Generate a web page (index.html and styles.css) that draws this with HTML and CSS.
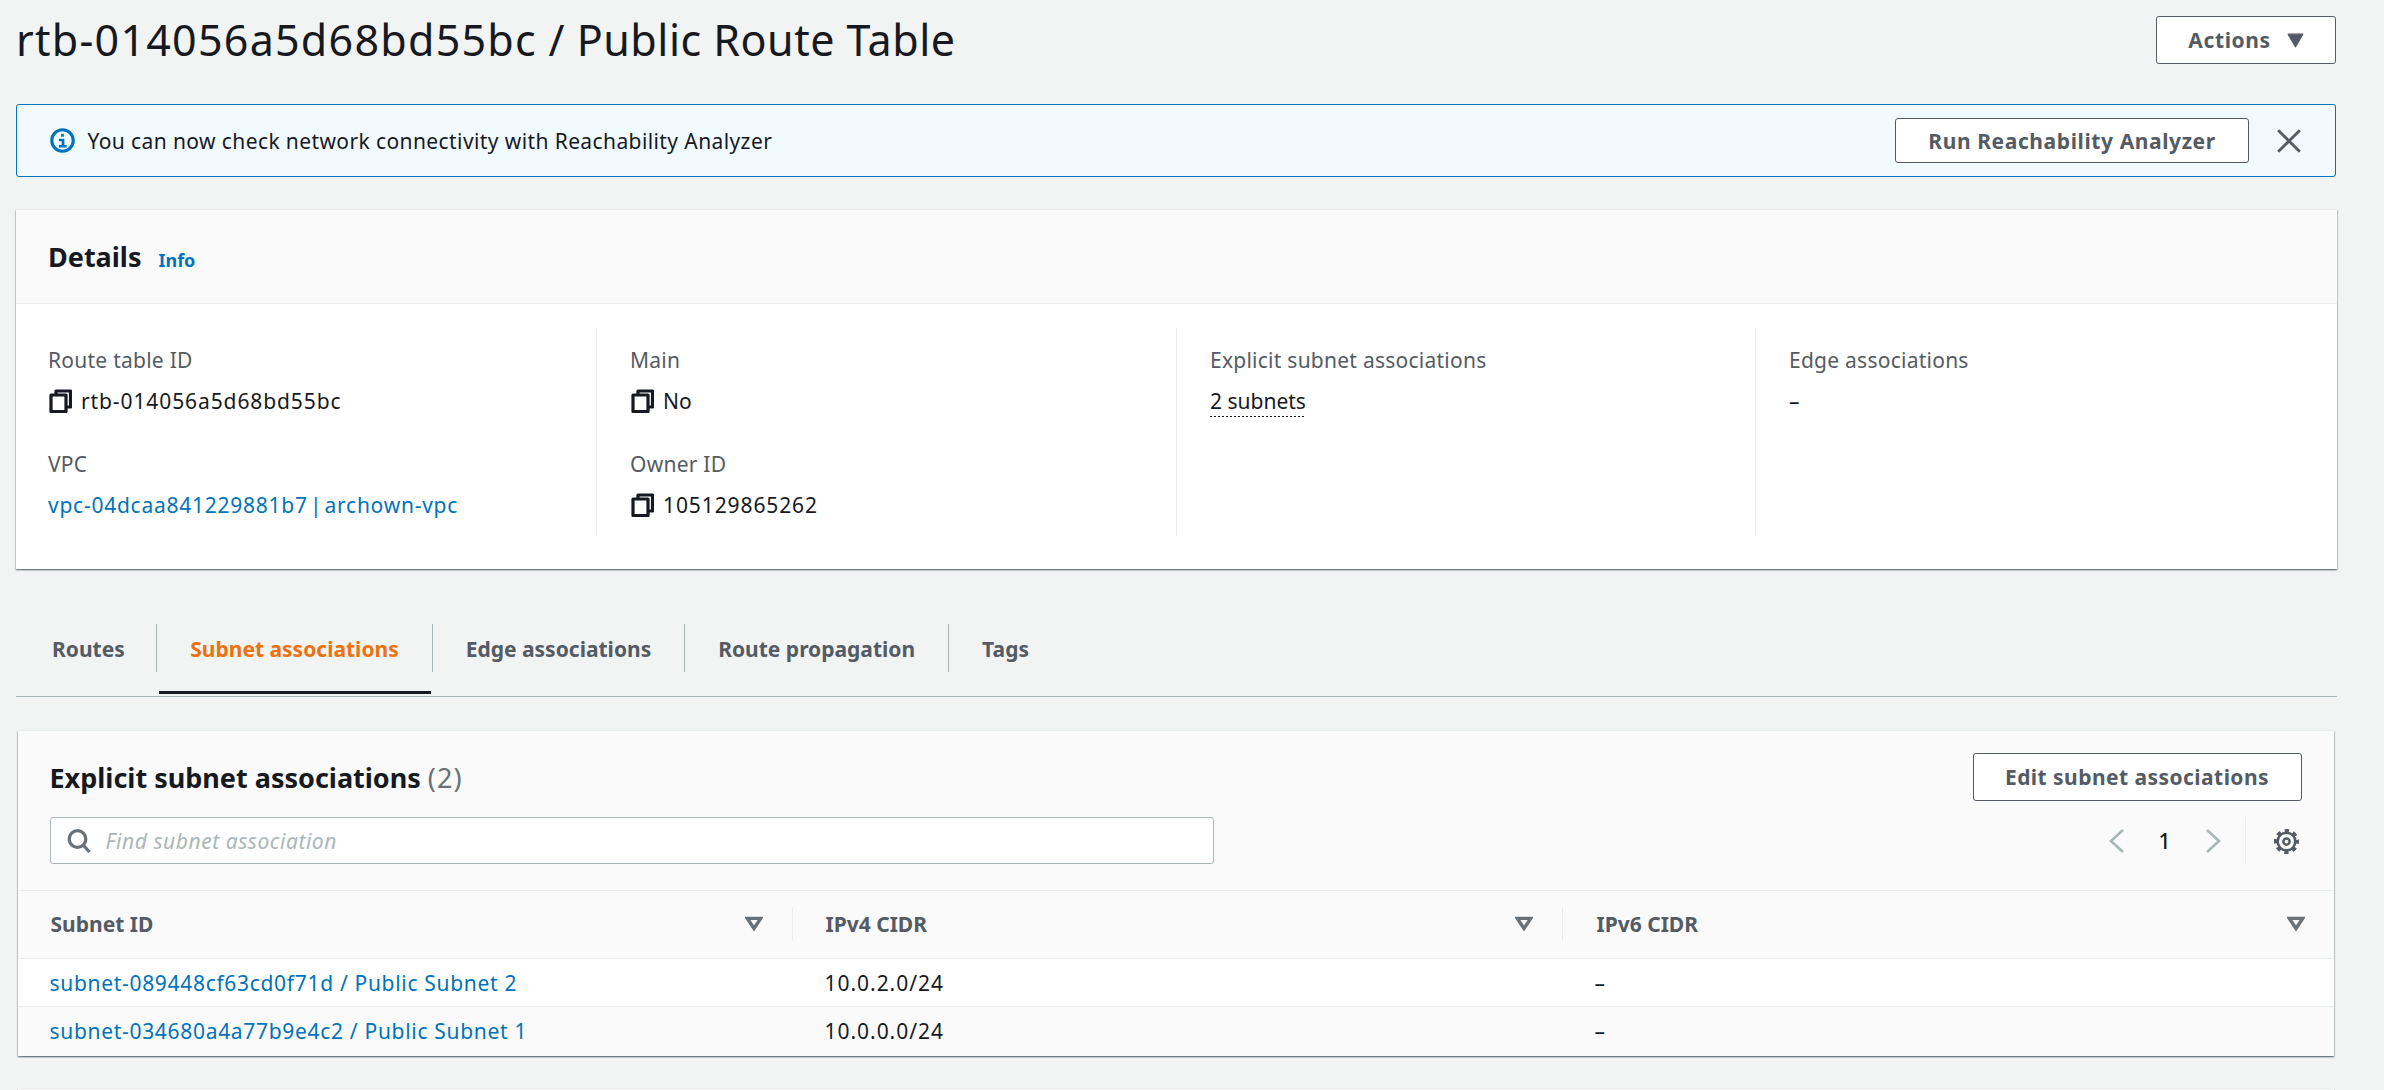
FILE: index.html
```html
<!DOCTYPE html>
<html lang="en">
<head>
    <meta charset="UTF-8">
    <meta name="viewport" content="width=device-width, initial-scale=1.0">
    <title>Route table</title>
    <link rel="stylesheet" href="styles.css">
</head>
<body>
    <div class="page">
        <div class="page-header">
            <h1><span class="h1-id">rtb-014056a5d68bd55bc</span> / Public Route Table</h1>
            <button class="btn btn-actions">Actions
                <svg class="caret" viewBox="0 0 16 14"><path d="M1 1h14L8 13z"/></svg>
            </button>
        </div>

        <div class="alert">
            <svg class="alert-icon" viewBox="0 0 24 24"><circle cx="12" cy="12" r="10.300"/><path class="alert-i" d="M12 5.500v3M8.500 11.500H12.500V17.500M8.500 17.500h7.500"/></svg>
            <span class="alert-text">You can now check network connectivity with Reachability Analyzer</span>
            <button class="btn btn-run">Run Reachability Analyzer</button>
            <svg class="alert-close" viewBox="0 0 24 24"><path d="M2 2l20 20M22 2L2 22"/></svg>
        </div>

        <div class="card card-details">
            <div class="details-head">
                <h2>Details</h2>
                <a class="info-link">Info</a>
            </div>
            <div class="details-grid">
                <div class="col">
                    <div class="field">
                        <div class="label">Route table ID</div>
                        <div class="value num"><svg class="copy" viewBox="0 0 23 24"><path d="M7 5V2h14.500v16H17M2 6h15v16.500H2z"/></svg>rtb-014056a5d68bd55bc</div>
                    </div>
                    <div class="field">
                        <div class="label">VPC</div>
                        <div class="value link vpc-link">vpc-04dcaa841229881b7 | archown-vpc</div>
                    </div>
                </div>
                <div class="col">
                    <div class="field">
                        <div class="label">Main</div>
                        <div class="value"><svg class="copy" viewBox="0 0 23 24"><path d="M7 5V2h14.500v16H17M2 6h15v16.500H2z"/></svg>No</div>
                    </div>
                    <div class="field">
                        <div class="label">Owner ID</div>
                        <div class="value num"><svg class="copy" viewBox="0 0 23 24"><path d="M7 5V2h14.500v16H17M2 6h15v16.500H2z"/></svg>105129865262</div>
                    </div>
                </div>
                <div class="col">
                    <div class="field">
                        <div class="label">Explicit subnet associations</div>
                        <div class="value"><span class="dotted">2 subnets</span></div>
                    </div>
                </div>
                <div class="col">
                    <div class="field">
                        <div class="label">Edge associations</div>
                        <div class="value">–</div>
                    </div>
                </div>
            </div>
        </div>

        <div class="tabs">
            <div class="tab tab-routes">Routes</div>
            <div class="tab tab-active">Subnet associations</div>
            <div class="tab">Edge associations</div>
            <div class="tab">Route propagation</div>
            <div class="tab tab-last">Tags</div>
        </div>

        <div class="card card-table">
            <div class="table-head">
                <div class="table-title-row">
                    <h2>Explicit subnet associations <span class="count">(2)</span></h2>
                    <button class="btn btn-edit">Edit subnet associations</button>
                </div>
                <div class="filter-row">
                    <div class="search">
                        <svg class="search-icon" viewBox="0 0 24 24"><circle cx="10.500" cy="10" r="8.300"/><path d="M16.500 16.500l6 6.500"/></svg>
                        <span>Find subnet association</span>
                    </div>
                    <div class="pager">
                        <svg class="chev" viewBox="0 0 16 24"><path d="M14 1L2 12l12 11"/></svg>
                        <span class="page-num">1</span>
                        <svg class="chev" viewBox="0 0 16 24"><path d="M2 1l12 11L2 23"/></svg>
                        <div class="pager-sep">
                            <svg class="gear" viewBox="0 0 24 24"><circle cx="12" cy="12" r="3"/><circle cx="12" cy="12" r="8.500"/><circle class="gear-teeth" cx="12" cy="12" r="10.300"/></svg>
                        </div>
                    </div>
                </div>
            </div>
            <table class="subnets">
                <thead>
                    <tr>
                        <th><div class="th-in">Subnet ID<svg class="sort" viewBox="0 0 16 14"><path d="M2 2h12L8 11z"/></svg></div></th>
                        <th><div class="th-in">IPv4 CIDR<svg class="sort" viewBox="0 0 16 14"><path d="M2 2h12L8 11z"/></svg></div></th>
                        <th><div class="th-in th-last">IPv6 CIDR<svg class="sort" viewBox="0 0 16 14"><path d="M2 2h12L8 11z"/></svg></div></th>
                    </tr>
                </thead>
                <tbody>
                    <tr>
                        <td class="link">subnet-089448cf63cd0f71d / Public Subnet 2</td>
                        <td class="cidr">10.0.2.0/24</td>
                        <td>–</td>
                    </tr>
                    <tr class="row-alt">
                        <td class="link">subnet-034680a4a77b9e4c2 / Public Subnet 1</td>
                        <td class="cidr">10.0.0.0/24</td>
                        <td>–</td>
                    </tr>
                </tbody>
            </table>
        </div>
        <div class="card card-next"></div>
    </div>
</body>
</html>
```
FILE: styles.css
```css
html, body {
    margin: 0;
    height: 1090px;
    overflow: hidden;
}
body {
    background-color: #f2f3f3;
    color: #16191f;
    font-family: "Noto Sans", sans-serif;
    font-size: 21px;
}
.page {
    width: 2320px;
    padding: 16px 0 0 16px;
}
h1, h2 {
    margin: 0;
}

/* header */
.page-header {
    display: flex;
    justify-content: space-between;
    align-items: center;
    height: 48px;
}
h1 {
    font-size: 43px;
    font-weight: 400;
    letter-spacing: .5px;
    margin-top: -2px;
}
.h1-id {
    letter-spacing: 1.25px;
}
.btn {
    box-sizing: border-box;
    display: flex;
    align-items: center;
    justify-content: center;
    background-color: #fff;
    border: 1.5px solid #545b64;
    border-radius: 3px;
    color: #545b64;
    font-family: inherit;
    font-size: 21px;
    font-weight: 700;
    letter-spacing: .45px;
    padding: 0;
}
.btn-actions {
    width: 180px;
    height: 48px;
    gap: 16px;
    letter-spacing: .6px;
}
.caret {
    width: 17px;
    height: 15px;
    fill: #545b64;
    stroke: #545b64;
    stroke-width: 1;
    stroke-linejoin: round;
}

/* alert */
.alert {
    box-sizing: border-box;
    display: flex;
    align-items: center;
    height: 73px;
    margin-top: 40px;
    padding: 0 33px 0 32.5px;
    background-color: #f1faff;
    border: 1.5px solid #0073bb;
    border-radius: 3px;
}
.alert-icon {
    width: 25px;
    height: 25px;
    fill: none;
    stroke: #0073bb;
    stroke-width: 3;
}
.alert-i {
    stroke-width: 2.6;
}
.alert-text {
    margin-left: 13px;
    flex: 1;
    letter-spacing: .4px;
}
.btn-run {
    width: 354px;
    height: 45px;
    letter-spacing: .6px;
}
.alert-close {
    width: 26px;
    height: 26px;
    margin-left: 27px;
    fill: none;
    stroke: #545b64;
    stroke-width: 2.6;
}

/* cards */
.card {
    background-color: #fff;
    box-shadow: 0 1.5px 1.5px 0 rgba(0, 28, 36, .4), 1px 1px 1px 0 rgba(0, 28, 36, .12), -1px 1px 1px 0 rgba(0, 28, 36, .12);
    border-top: 1.5px solid #eaeded;
}
.card-details {
    box-sizing: border-box;
    width: 2321px;
    height: 360px;
    margin-top: 32px;
}
.details-head {
    box-sizing: border-box;
    display: flex;
    align-items: baseline;
    gap: 17px;
    height: 94px;
    padding: 28px 32px 0;
    background-color: #fafafa;
    border-bottom: 1.5px solid #eaeded;
}
h2 {
    font-size: 27px;
    font-weight: 700;
}
.info-link {
    color: #0073bb;
    font-size: 18px;
    font-weight: 700;
}
.details-grid {
    display: grid;
    grid-template-columns: 565px 580px 579px 1fr;
    padding: 24px 0 0 16px;
}
.col {
    height: 208px;
    padding-left: 16px;
    border-right: 1.5px solid #eaeded;
}
.col + .col {
    padding-left: 33px;
}
.col:last-child {
    border-right: none;
}
.field {
    height: 104px;
    padding-top: 16px;
    box-sizing: border-box;
}
.label {
    color: #545b64;
    line-height: 32px;
    letter-spacing: .25px;
}
.value {
    display: flex;
    align-items: center;
    gap: 10px;
    line-height: 32px;
    margin-top: 9px;
}
.num {
    letter-spacing: .9px;
}
.link {
    color: #0073bb;
}
.vpc-link {
    letter-spacing: .75px;
    word-spacing: -4px;
}
.copy {
    width: 23px;
    height: 24px;
    margin-left: 1px;
    margin-right: -1px;
    fill: none;
    stroke: #16191f;
    stroke-width: 3.2;
    stroke-linejoin: round;
}
.dotted {
    height: 32px;
    background-image: linear-gradient(to right, #16191f 50%, transparent 50%);
    background-size: 4px 1.5px;
    background-repeat: repeat-x;
    background-position: left bottom;
}

/* tabs */
.tabs {
    display: flex;
    box-sizing: border-box;
    height: 128px;
    padding-top: 55px;
    width: 2321px;
    border-bottom: 1.5px solid #aab7b8;
}
.tab {
    box-sizing: border-box;
    height: 48px;
    line-height: 50px;
    padding: 0 33px;
    color: #545b64;
    font-weight: 700;
    border-right: 1.5px solid #aab7b8;
    position: relative;
}
.tab-routes {
    padding-left: 36px;
    padding-right: 31.5px;
}
.tab-active {
    color: #ec7211;
}
.tab-active::after {
    content: "";
    position: absolute;
    left: 2px;
    right: 1px;
    top: 67px;
    height: 3px;
    background-color: #16191f;
}
.tab-last {
    border-right: none;
}

/* table card */
.card-table {
    box-sizing: border-box;
    width: 2316px;
    height: 326px;
    margin-top: 33px;
    margin-left: 1.5px;
    background-color: #fafafa;
}
.table-head {
    height: 160px;
    box-sizing: border-box;
    padding: 22px 32px 0;
    border-bottom: 1.5px solid #eaeded;
}
.table-title-row {
    display: flex;
    justify-content: space-between;
    align-items: center;
    height: 48px;
}
.count {
    color: #687078;
    font-weight: 400;
    letter-spacing: 1px;
}
.btn-edit {
    width: 329px;
    height: 48px;
    background-color: #fff;
}
.filter-row {
    display: flex;
    justify-content: space-between;
    margin-top: 16px;
    height: 48px;
}
.search {
    box-sizing: border-box;
    display: flex;
    align-items: center;
    gap: 15px;
    width: 1164px;
    height: 47px;
    padding-left: 16px;
    background-color: #fff;
    border: 1.5px solid #aab7b8;
    border-radius: 3px;
    color: #aab7b8;
    font-style: italic;
    letter-spacing: .55px;
}
.search-icon {
    width: 24px;
    height: 24px;
    fill: none;
    stroke: #687078;
    stroke-width: 3.2;
}
.pager {
    display: flex;
    align-items: center;
    height: 48px;
    margin-right: 2.5px;
}
.chev {
    width: 16px;
    height: 24px;
    fill: none;
    stroke: #aab7b8;
    stroke-width: 2.6;
}
.page-num {
    width: 32px;
    margin: 0 24px;
    text-align: center;
    font-weight: 500;
    font-size: 21px;
}
.pager-sep {
    display: flex;
    align-items: center;
    height: 48px;
    margin-left: 24px;
    padding-left: 28.5px;
    border-left: 1.5px solid #eaeded;
}
.gear {
    width: 25px;
    height: 25px;
    fill: none;
    stroke: #545b64;
    stroke-width: 2.4;
}
.gear-teeth {
    stroke-width: 3.4;
    stroke-dasharray: 4.1 3.99;
    stroke-dashoffset: 2.05;
}
.subnets {
    width: 100%;
    border-collapse: collapse;
    table-layout: fixed;
}
.subnets th {
    box-sizing: border-box;
    height: 67px;
    padding: 0;
    text-align: left;
    color: #545b64;
    font-weight: 700;
    border-bottom: 1.5px solid #eaeded;
}
.subnets th:nth-child(1) {
    width: 775px;
}
.subnets th:nth-child(2) {
    width: 770px;
}
.th-in {
    display: flex;
    justify-content: space-between;
    align-items: center;
    height: 34px;
    padding: 0 29px 0 33px;
    border-right: 1.5px solid #eaeded;
}
.th-last {
    padding-left: 34px;
    border-right: none;
}
.sort {
    width: 18px;
    height: 16px;
    fill: none;
    stroke: #687078;
    stroke-width: 3;
}
.subnets td {
    box-sizing: border-box;
    height: 48px;
    padding: 1.5px 0 0 32px;
    background-color: #fff;
    border-bottom: 1.5px solid #eaeded;
}
.subnets td.link {
    letter-spacing: .69px;
}
.subnets td.cidr {
    letter-spacing: .97px;
}
.subnets .row-alt td {
    background-color: #fafafa;
    border-bottom: none;
}
.card-next {
    width: 2316px;
    height: 40px;
    margin-top: 32px;
    margin-left: 1.5px;
    background-color: #fafafa;
}
```
